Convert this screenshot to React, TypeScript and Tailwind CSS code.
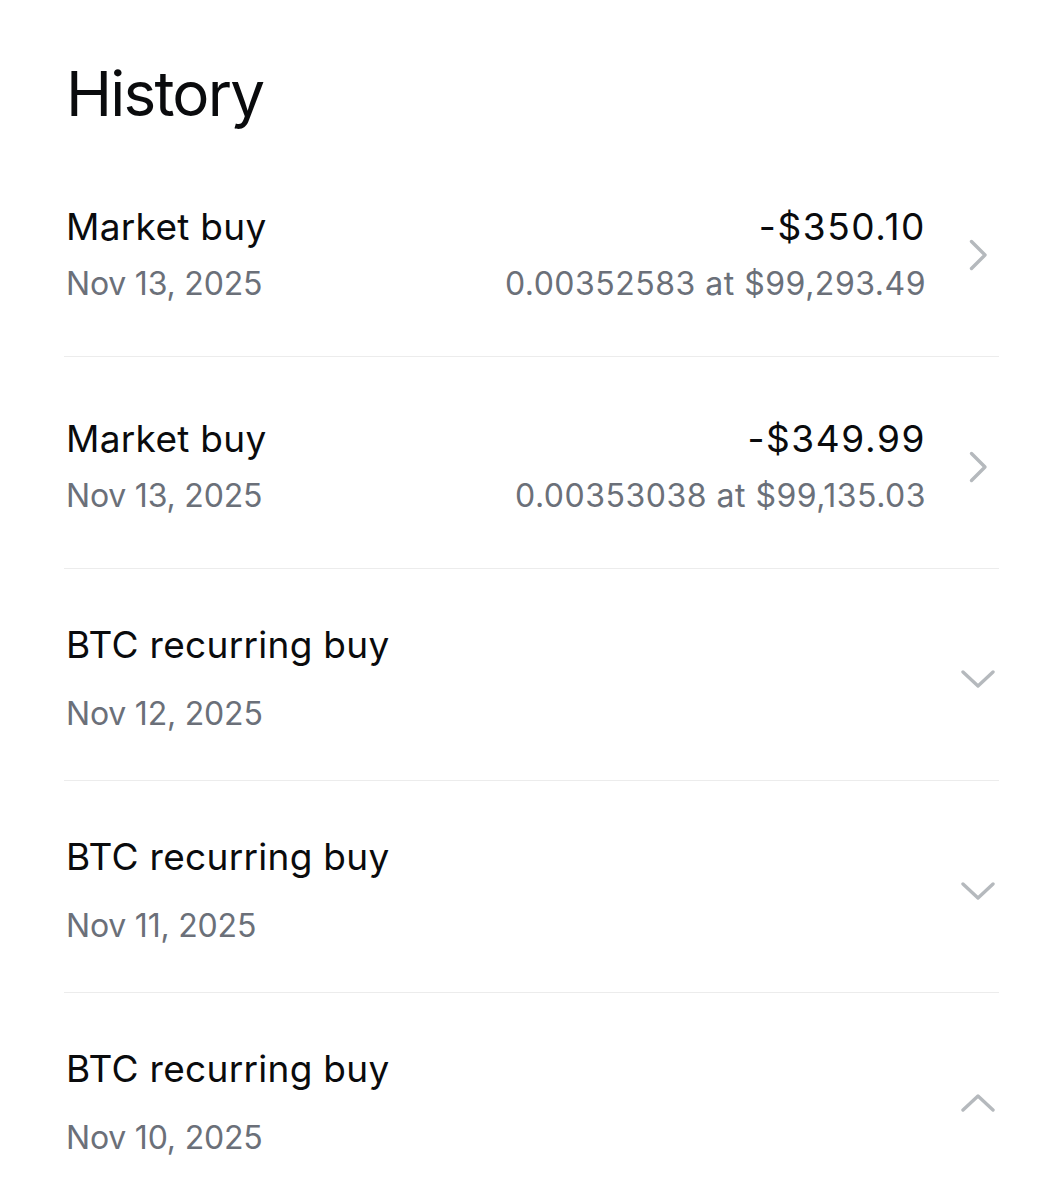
type Entry = {
  title: string
  date: string
  amount?: string
  detail?: string
  icon: 'right' | 'down' | 'up'
}

const entries: Entry[] = [
  { title: 'Market buy', date: 'Nov 13, 2025', amount: '-$350.10', detail: '0.00352583 at $99,293.49', icon: 'right' },
  { title: 'Market buy', date: 'Nov 13, 2025', amount: '-$349.99', detail: '0.00353038 at $99,135.03', icon: 'right' },
  { title: 'BTC recurring buy', date: 'Nov 12, 2025', icon: 'down' },
  { title: 'BTC recurring buy', date: 'Nov 11, 2025', icon: 'down' },
  { title: 'BTC recurring buy', date: 'Nov 10, 2025', icon: 'up' },
]

function RowIcon({ kind }: { kind: Entry['icon'] }) {
  if (kind === 'right')
    return (
      <svg width="20" height="32" viewBox="0 0 20 32" fill="none" stroke="#b5b9bd" strokeWidth="3.4" strokeLinecap="round" strokeLinejoin="round">
        <path d="M3.5 2.5l13.5 13.5L3.5 29.5" />
      </svg>
    )
  return (
    <svg width="34" height="20" viewBox="0 0 34 20" fill="none" stroke="#b5b9bd" strokeWidth="3.4" strokeLinecap="round" strokeLinejoin="round">
      <path d={kind === 'down' ? 'M2 3l15 14L32 3' : 'M2 17L17 3l15 14'} />
    </svg>
  )
}

function HistoryRow({ entry }: { entry: Entry }) {
  const recurring = !entry.amount
  return (
    <div className="h-[212px] flex items-center pt-[8px] border-b border-[#ececec]">
      <div className="flex-1 min-w-0 pl-[2px]">
        <div className="text-[37px] leading-[44px] tracking-[0.3px] text-[#0a0b0d]">{entry.title}</div>
        <div className={`text-[32px] leading-[40px] text-[#6b7079] ${recurring ? 'mt-[27px]' : 'mt-[15px]'}`}>
          {entry.date}
        </div>
      </div>
      {entry.amount && (
        <div className="text-right mr-[35px]">
          <div className="text-[37px] leading-[44px] tracking-[1.6px] text-[#0a0b0d]">{entry.amount}</div>
          <div className="text-[32px] leading-[40px] tracking-[0.5px] text-[#6b7079] mt-[15px]">{entry.detail}</div>
        </div>
      )}
      <div className="w-[34px] h-[34px] flex justify-center items-center mr-[4px]">
        <RowIcon kind={entry.icon} />
      </div>
    </div>
  )
}

export default function App() {
  return (
    <div className="min-h-[1200px] bg-white px-[64px] font-['Inter',sans-serif] tracking-[-0.2px]">
      <h1 className="pt-[56px] text-[62px] leading-[76px] tracking-[-1.8px] text-[#0a0b0d] font-normal pl-[2px] mb-[13px]">
        History
      </h1>
      {entries.map((e, i) => (
        <HistoryRow key={i} entry={e} />
      ))}
    </div>
  )
}
